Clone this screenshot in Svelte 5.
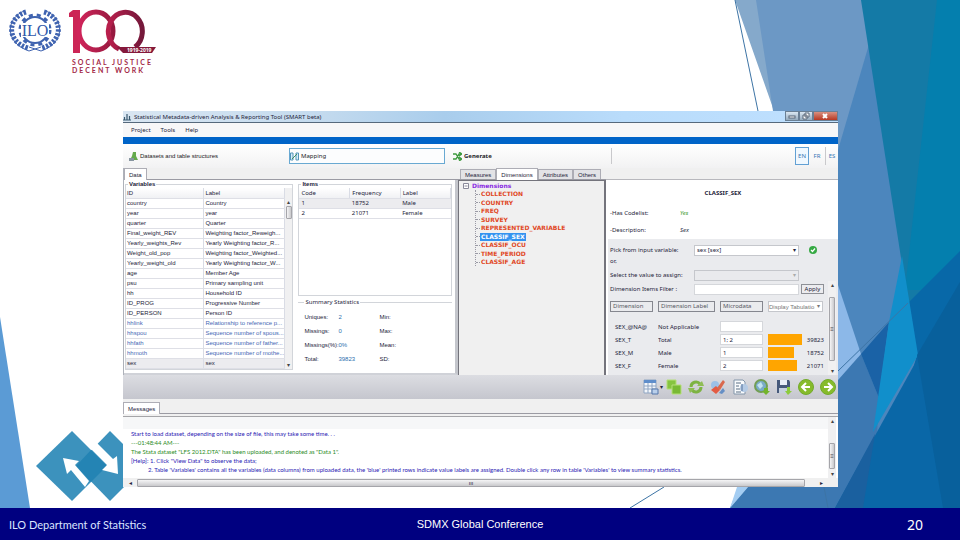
<script>
	const menu = ['Project', 'Tools', 'Help'];
	const languages = ['EN', 'FR', 'ES'];
	const dimensionTabs = ['Measures', 'Dimensions', 'Attributes', 'Others'];

	const variables = [
		{ id: 'country', label: 'Country' },
		{ id: 'year', label: 'year' },
		{ id: 'quarter', label: 'Quarter' },
		{ id: 'Final_weight_REV', label: 'Weighting factor_Reweigh...' },
		{ id: 'Yearly_weights_Rev', label: 'Yearly Weighting factor_R...' },
		{ id: 'Weight_old_pop', label: 'Weighting factor_Weighted...' },
		{ id: 'Yearly_weight_old', label: 'Yearly Weighting factor_W...' },
		{ id: 'age', label: 'Member Age' },
		{ id: 'psu', label: 'Primary sampling unit' },
		{ id: 'hh', label: 'Household ID' },
		{ id: 'ID_PROG', label: 'Progressive Number' },
		{ id: 'ID_PERSON', label: 'Person ID' },
		{ id: 'hhlink', label: 'Relationship to reference p...', labelled: true },
		{ id: 'hhspou', label: 'Sequence number of spous...', labelled: true },
		{ id: 'hhfath', label: 'Sequence number of father...', labelled: true },
		{ id: 'hhmoth', label: 'Sequence number of mothe...', labelled: true },
		{ id: 'sex', label: 'sex', selected: true }
	];

	const items = [
		{ code: 1, frequency: 18752, label: 'Male' },
		{ code: 2, frequency: 21071, label: 'Female' }
	];

	const stats = [
		['Uniques:', '2', 'Min:'],
		['Missings:', '0', 'Max:'],
		['Missings(%):', '0%', 'Mean:'],
		['Total:', '39823', 'SD:']
	];

	const dimensions = [
		'COLLECTION',
		'COUNTRY',
		'FREQ',
		'SURVEY',
		'REPRESENTED_VARIABLE',
		'CLASSIF_SEX',
		'CLASSIF_OCU',
		'TIME_PERIOD',
		'CLASSIF_AGE'
	];

	const codes = [
		{ code: 'SEX_@NA@', label: 'Not Applicable', value: '', count: null },
		{ code: 'SEX_T', label: 'Total', value: '1; 2', count: 39823, share: 100 },
		{ code: 'SEX_M', label: 'Male', value: '1', count: 18752, share: 77 },
		{ code: 'SEX_F', label: 'Female', value: '2', count: 21071, share: 86 }
	];

	const actions = ['Table', 'Copy', 'Refresh', 'Clear', 'Script', 'Search', 'Save', 'Back', 'Next'];

	let activeTab = $state('Dimensions');
	let activeDimension = $state('CLASSIF_SEX');
	let language = $state('EN');
</script>

<svelte:head>
	<title>ILO Department of Statistics</title>
</svelte:head>

<div class="slide">
	<svg class="backdrop" viewBox="0 0 960 508" preserveAspectRatio="none" aria-hidden="true">
		<path d="M735 0H960V508H730L774 400V111Z" fill="#85a9cb" />
		<path d="M756 0H960V508H773V111Z" fill="#6c98c5" />
		<path d="M882 0L838 150V508H960V0Z" fill="#4c86bd" />
		<path d="M730 508L748 487H838V380L861 354L879 398L873 508Z" fill="#3c78b2" />
		<path d="M730 508L737 487H748Z" fill="#a4cdf2" />
		<path d="M838 285L861 354L838 380Z" fill="#8cb8e8" />
		<path d="M861 354L889 322L879 398Z" fill="#1a62a6" />
		<path d="M861 0H960V300L908 303Z" fill="#147aa6" />
		<path d="M937 0H960V290H905Z" fill="#047fae" />
		<path d="M908 303L960 251V508H873L917 355Z" fill="#0868a8" />
		<path d="M902 256L918 355L873 432L889 322Z" fill="#118fcb" />
		<path d="M960 282L835 508H960Z" fill="#0a67a7" />
		<path d="M960 282L917 355L943 508H960Z" fill="#08609c" />
		<path d="M875 434L863 508H835Z" fill="#1a609f" />
		<path d="M735 0L758 111M838 371L908 303M664 487L630 508M824 487L828 508" fill="none" stroke="#3d74a5" stroke-width="1" />
		<path d="M0 317L30 508H0Z" fill="#5b9bd5" />
		<path d="M72 431L107 466L72 501L36 466Z" fill="#3c92bd" />
		<path d="M110 431L145 466L110 501L76 466Z" fill="#3c92bd" />
		<path d="M91 450L107 466L91 482L76 466Z" fill="#2484b4" />
		<path d="M63 458L79 461L75 465L89 481L85 487L71 470L67 474ZM93 443L97 443L113 459L117 456L118 474L102 470L107 465L90 448Z" fill="#fff" />
	</svg>

	<header class="brand">
		<svg class="emblem" viewBox="0 0 52 44" role="img" aria-label="ILO">
			<g fill="none" stroke="#3f63b0">
				<circle cx="26" cy="21" r="13" stroke-width="2" />
				<circle cx="26" cy="21" r="15" stroke-width="3" stroke-dasharray="4 4" />
				<path d="M17 3C-1 8-4 32 19 39M35 3C53 8 56 32 33 39" stroke-width="5" stroke-dasharray="2.5 1.5" />
				<path d="M15 2C-4 10-4 34 20 42L32 38M37 2C56 10 56 34 32 42L20 38" stroke-width="1" />
			</g>
			<rect x="12" y="14" width="28" height="14" fill="#fff" />
			<text x="26" y="27" text-anchor="middle">ILO</text>
		</svg>
		<div class="centenary">
			<svg viewBox="0 0 88 46" role="img" aria-label="100, 1919-2019">
				<defs>
					<linearGradient id="wine"><stop offset="0" stop-color="#d0245a" /><stop offset="1" stop-color="#96193f" /></linearGradient>
					<linearGradient id="plum"><stop offset="0" stop-color="#b81f4c" /><stop offset="1" stop-color="#74183a" /></linearGradient>
				</defs>
				<path d="M4 1H11V44H4V8H0V4Z" fill="#cc2556" />
				<ellipse cx="27" cy="22" rx="17" ry="19" fill="none" stroke="url(#wine)" stroke-width="5" />
				<path d="M50 40A17 19 0 1 1 66 38" fill="none" stroke="url(#plum)" stroke-width="5" />
				<path d="M48 38H87L83 44H54Z" fill="#85193b" />
				<text x="58" y="43">1919-2019</text>
			</svg>
			<p>SOCIAL JUSTICE<br />DECENT WORK</p>
		</div>
	</header>

	<main class="window">
		<div class="titlebar">
			<svg class="app-icon" viewBox="0 0 8 8"><path d="M0 7H8M1.500 7V4M4 7V1M6.500 7V3" stroke="#3a5a70" stroke-width="1.200" /></svg>
			<h1>Statistical Metadata-driven Analysis &amp; Reporting Tool (SMART beta)</h1>
			<div class="controls">
				<button aria-label="Minimise"><svg viewBox="0 0 10 8"><rect x="2" y="4" width="6" height="2" /></svg></button>
				<button aria-label="Restore"><svg viewBox="0 0 10 8"><path d="M4 1H8V5H4ZM2 3H6V7H2Z" /></svg></button>
				<button class="close" aria-label="Close"><svg viewBox="0 0 10 8"><path d="M3 2L7 6M7 2L3 6" /></svg></button>
			</div>
		</div>

		<nav class="menu">
			{#each menu as entry}<button>{entry}</button>{/each}
		</nav>

		<div class="steps">
			<button class="step">
				<svg viewBox="0 0 9 9"><path d="M4 0H7V4L9 8H1L3 4Z" fill="#65aa4b" /><path d="M0 6H5V9H0Z" fill="#8795a0" /></svg>
				Datasets and table structures
			</button>
			<button class="step active">
				<svg viewBox="0 0 9 9"><path d="M.5 1H3V8H.5ZM6 1H8.500V8H6Z" fill="#d7ecf9" stroke="#5295b8" /><path d="M2 7L7 2" stroke="#3f8e60" /></svg>
				Mapping
			</button>
			<button class="step">
				<svg viewBox="0 0 9 9"><path d="M0 2H3L6 7H8M0 7H3L6 2H8M6 0L9 2L6 4M6 5L9 7L6 9" fill="none" stroke="#3e9a3e" stroke-width="1.300" /></svg>
				<b>Generate</b>
			</button>
			<div class="languages">
				{#each languages as code}
					<button class:active={language === code} onclick={() => (language = code)}>{code}</button>
				{/each}
			</div>
		</div>

		<div class="workspace">
			<section class="data">
				<div class="tabs"><button class="active">Data</button></div>
				<div class="data-body">
					<fieldset class="variables">
						<legend>Variables</legend>
						<div class="scroll-box">
							<table>
								<thead><tr><th>ID</th><th>Label</th></tr></thead>
								<tbody>
									{#each variables as v (v.id)}
										<tr class:labelled={v.labelled} class:selected={v.selected}><td>{v.id}</td><td>{v.label}</td></tr>
									{/each}
								</tbody>
							</table>
							<div class="scrollbar list-scroll"><i>▴</i><span class="thumb"></span><i>▾</i></div>
						</div>
					</fieldset>
					<div class="details">
						<fieldset class="items">
							<legend>Items</legend>
							<table>
								<thead><tr><th>Code</th><th>Frequency</th><th>Label</th></tr></thead>
								<tbody>
									{#each items as item, i}
										<tr class:selected={i === 0}><td>{item.code}</td><td>{item.frequency}</td><td>{item.label}</td></tr>
									{/each}
								</tbody>
							</table>
						</fieldset>
						<fieldset class="summary">
							<legend>Summary Statistics</legend>
							<div class="stats">
								{#each stats as [name, value, other]}
									<span>{name}</span><span class="value">{value}</span><span>{other}</span>
								{/each}
							</div>
						</fieldset>
					</div>
				</div>
			</section>

			<section class="structure">
				<div class="tabs">
					{#each dimensionTabs as tab}
						<button class:active={activeTab === tab} onclick={() => (activeTab = tab)}>{tab}</button>
					{/each}
				</div>
				<div class="tree">
					<p><svg viewBox="0 0 6 6"><path d="M.5 .5H5.500V5.500H.5ZM1.500 3H4.500" fill="#fff" stroke="#8a8a9a" /></svg>Dimensions</p>
					<ul>
						{#each dimensions as name}
							<li><button class:active={activeDimension === name} onclick={() => (activeDimension = name)}>{name}</button></li>
						{/each}
					</ul>
				</div>
			</section>

			<section class="mapping">
				<h2>CLASSIF_SEX</h2>
				<dl>
					<dt>-Has Codelist:</dt><dd class="yes">Yes</dd>
					<dt>-Description:</dt><dd>Sex</dd>
				</dl>
				<div class="mapping-form">
					<div class="field">
						<label for="source">Pick from input variable:</label>
						<span class="pick"><select id="source"><option>sex [sex]</option></select></span>
						<svg class="ok" viewBox="0 0 8 8"><circle cx="4" cy="4" r="4" fill="#36a944" /><path d="M2 4L3.500 5.500L6 2.500" fill="none" stroke="#fff" stroke-width="1.200" /></svg>
					</div>
					<p>or,</p>
					<div class="field">
						<label for="fixed">Select the value to assign:</label>
						<span class="pick"><select id="fixed" disabled><option></option></select></span>
					</div>
					<div class="codelist">
						<div class="codelist-main">
							<div class="field filter">
								<label for="filter">Dimension Items Filter :</label>
								<input id="filter" type="text" />
								<button>Apply</button>
							</div>
							<table>
								<thead>
									<tr>
										<th><span class="head">Dimension</span></th>
										<th><span class="head">Dimension Label</span></th>
										<th><span class="head">Microdata</span></th>
										<th><span class="pick"><select aria-label="Display"><option>Display Tabulatio</option></select></span></th>
									</tr>
								</thead>
								<tbody>
									{#each codes as row}
										<tr>
											<td>{row.code}</td>
											<td>{row.label}</td>
											<td><input type="text" value={row.value} aria-label={row.code} /></td>
											<td>
												{#if row.count}
													<div class="tally"><span class="track"><span class="bar" style="width: {row.share}%"></span></span>{row.count}</div>
												{/if}
											</td>
										</tr>
									{/each}
								</tbody>
							</table>
						</div>
						<div class="scrollbar code-scroll"><i>▴</i><span class="thumb">≡</span><i>▾</i></div>
					</div>
				</div>
			</section>
		</div>

		<div class="actions">
			{#each actions as action, i}
				<button aria-label={action}>
					<svg viewBox="0 0 16 16">
						{#if i === 0}
							<path d="M1 1H13V14H1Z" fill="#f2f6fb" stroke="#8fa5c2" /><path d="M1 1H13V4H1Z" fill="#5f8ecb" /><path d="M1 7H13M1 10H13M5 4V14M9 4V14" stroke="#8fa5c2" /><path d="M9 10H15V15H9Z" fill="#b9cfeb" stroke="#5577aa" />
						{:else if i === 1}
							<path d="M1 1H10V10H1Z" fill="#86c440" stroke="#b5df79" /><path d="M6 6H15V15H6Z" fill="#79b935" stroke="#b5df79" />
						{:else if i === 2}
							<path d="M3 8A5 5 0 0 1 12 5M13 8A5 5 0 0 1 4 11" fill="none" stroke="#7db343" stroke-width="3" /><path d="M9 7H16L14 2ZM0 9H7L2 14Z" fill="#8fbd55" />
						{:else if i === 3}
							<circle cx="5" cy="6" r="4" fill="#9cc1e8" /><path d="M1 11L6 7L10 11L6 15Z" fill="#e35b43" /><path d="M7 9L13 1L15 3L10 11Z" fill="#d9684d" /><path d="M9 14L13 9L15 12L12 15Z" fill="#668fc5" />
						{:else if i === 4}
							<path d="M2 1H11L13 3V15H2Z" fill="#f9fbfd" stroke="#8295aa" /><path d="M4 4H9M4 7H7M4 10H8M4 13H9" stroke="#5b6e84" /><circle cx="12" cy="9" r="4" fill="#b5cbe5" /><path d="M10 5V12" stroke="#55739c" />
						{:else if i === 5}
							<circle cx="7" cy="7" r="6" fill="#7aacc8" stroke="#729e55" stroke-width="2" /><path d="M3 6L7 3L9 7L6 10Z" fill="#c3e3f0" /><path d="M10 9H14V12H16L12 16L8 12H10Z" fill="#72b42b" />
						{:else if i === 6}
							<path d="M1 1H13L14 3V14H1Z" fill="#46597a" /><path d="M4 1H11V6H4Z" fill="#e8eef6" /><path d="M3 9H11V14H3Z" fill="#c5d0de" /><path d="M11 8H14V12H16L12 16L9 12H11Z" fill="#8dcb3c" />
						{:else}
							<circle cx="8" cy="8" r="7.500" fill="#86bb2b" stroke="#73aa2c" />
							{#if i === 7}<path d="M12 8H5M8 4L4 8L8 12" fill="none" stroke="#fff" stroke-width="2" />{:else}<path d="M4 8H11M8 4L12 8L8 12" fill="none" stroke="#fff" stroke-width="2" />{/if}
						{/if}
					</svg>
				</button>
				{#if i === 0}<span class="caret">▾</span>{/if}
			{/each}
		</div>

		<section class="messages">
			<div class="tabs"><button class="active">Messages</button></div>
			<div class="log-frame">
				<div class="log">
					<p>Start to load dataset, depending on the size of file, this may take some time. . .</p>
					<p class="done">---01:48:44 AM---</p>
					<p class="done">The Stata dataset "LFS 2012.DTA" has been uploaded, and denoted as "Data 1".</p>
					<p>[Help]: 1. Click "View Data" to observe the data;</p>
					<p class="indent">2. Table 'Variables' contains all the variables (data columns) from uploaded data, the 'blue' printed rows indicate value labels are assigned. Double click any row in table 'Variables' to view summary statistics.</p>
				</div>
				<div class="scrollbar log-scroll"><i>▴</i><span class="thumb">≡</span><i>▾</i></div>
			</div>
			<div class="hscroll"><i>◂</i><span class="thumb">ııı</span><i>▸</i></div>
		</section>
	</main>

	<footer>
		<span class="department">ILO Department of Statistics</span>
		<span class="event">SDMX Global Conference</span>
		<span class="page">20</span>
	</footer>
</div>

<style>
	:global(body) {
		margin: 0;
	}

	.slide,
	.slide * {
		box-sizing: border-box;
	}

	.slide {
		position: relative;
		min-height: 100vh;
		display: flex;
		flex-direction: column;
		background: #fff;
		font-family: 'Noto Sans', sans-serif;
		overflow: hidden;
	}

	.backdrop {
		position: absolute;
		left: 0;
		top: 0;
		width: 100%;
		height: calc(100% - 32px);
	}

	.brand {
		position: relative;
		display: flex;
		gap: 8px;
		padding: 9px;
		min-height: 111px;
	}

	.emblem {
		width: 52px;
		height: 44px;
	}

	.emblem text {
		font: 16px 'Liberation Serif', serif;
		fill: #3058aa;
	}

	.centenary svg {
		display: block;
		width: 88px;
		height: 46px;
	}

	.centenary text {
		font: bold 5px 'Noto Sans', sans-serif;
		fill: #fff;
	}

	.centenary p {
		margin: 3px 0 0 3px;
		font: bold 7px/8px Lato, sans-serif;
		letter-spacing: 2px;
		color: #a32a48;
	}

	button,
	input,
	select {
		margin: 0;
		padding: 0;
		border: 0;
		border-radius: 0;
		background: none;
		font: inherit;
		color: inherit;
	}

	h1,
	h2,
	p,
	ul,
	dl,
	dd,
	fieldset {
		margin: 0;
		padding: 0;
	}

	table {
		border-collapse: collapse;
		table-layout: fixed;
		width: 100%;
	}

	th,
	td {
		padding: 0;
		font-weight: 400;
		text-align: left;
		white-space: nowrap;
		overflow: hidden;
	}

	i {
		font-style: normal;
	}

	.window {
		position: relative;
		display: flex;
		flex-direction: column;
		flex: 1;
		margin: 0 122px 21px 123px;
		background: #f0f0f0;
		color: #24243a;
		font-size: 6px;
		line-height: 8px;
		white-space: nowrap;
	}

	.titlebar {
		display: flex;
		align-items: center;
		gap: 3px;
		height: 12px;
		background: linear-gradient(90deg, #d9e6f2, #c3daee 28%, #a9cdec 45%, #b9dcfb 70%, #bfe0ff);
		border-bottom: 1px solid #56697c;
	}

	.titlebar h1 {
		flex: 1;
		font-size: 6px;
		font-weight: 400;
	}

	.app-icon {
		width: 8px;
		height: 8px;
	}

	.controls {
		display: flex;
		align-self: flex-start;
		height: 10px;
		width: 53px;
	}

	.controls button {
		flex: 1;
		border: 1px solid #6a7f94;
		background: linear-gradient(#dbe7f2, #94aabd);
	}

	.controls button.close {
		flex: 2;
		background: linear-gradient(#d99080, #b83822);
	}

	.controls svg {
		display: block;
		width: 10px;
		height: 8px;
		margin: auto;
		fill: #fff;
		stroke: #566577;
	}

	.controls .close svg {
		stroke: #fff;
		stroke-width: 2;
	}

	.menu {
		display: flex;
		gap: 10px;
		height: 21px;
		padding: 1px 8px 2px;
		background: #f7f7f8;
		border-bottom: 7px solid #0064c8;
	}

	.steps {
		display: flex;
		align-items: center;
		height: 24px;
		padding-left: 6px;
		background: linear-gradient(#fff, #f2f2f3);
	}

	.step {
		display: flex;
		align-items: center;
		gap: 2px;
		width: 22%;
		height: 16px;
		color: #1a1a24;
	}

	.step:first-child {
		width: 160px;
		font-family: 'Liberation Sans', sans-serif;
	}

	.step svg {
		width: 9px;
		height: 9px;
	}

	.step.active {
		border: 1px solid #69a9d2;
		background: #fcfdfe;
		margin-right: 8px;
	}

	.step:nth-child(3) {
		width: 159px;
		border-right: 1px solid #c9c9cc;
	}

	.languages {
		display: flex;
		margin-left: auto;
		color: #3577b5;
	}

	.languages button {
		width: 16px;
		height: 18px;
	}

	.languages button.active {
		width: 14px;
		border: 1px solid #62a0d4;
		background: #f0f8ff;
	}

	.languages button:last-child {
		width: 13px;
		border-left: 1px solid #c9c9cc;
	}

	.workspace {
		display: grid;
		grid-template-columns: 335fr 148fr 232fr;
		height: 207px;
	}

	.tabs {
		display: flex;
		align-items: flex-end;
		height: 12px;
		border-bottom: 1px solid #9b9ba3;
		font-family: 'Liberation Sans', sans-serif;
	}

	.tabs button {
		height: 10px;
		padding: 0 4px;
		border: 1px solid #adadb5;
		border-bottom: 0;
		background: #e3e3e6;
	}

	.tabs button.active {
		height: 12px;
		margin-bottom: -1px;
		background: #fff;
	}

	.data {
		border-left: 1px solid #aeb2ba;
	}

	.data-body {
		display: flex;
		gap: 5px;
		height: 195px;
		padding: 0 3px 3px 1px;
		background: #fff;
		border-right: 3px solid #c4c6cc;
		border-bottom: 2px solid #d0d2d8;
	}

	fieldset {
		min-width: 0;
		border: 1px solid #d2d5da;
	}

	legend {
		margin-left: 2px;
		padding: 0 1px;
		line-height: 8px;
	}

	.variables {
		flex: 168;
	}

	.variables legend,
	.items legend {
		font-family: 'Liberation Sans', sans-serif;
		font-weight: 700;
	}

	.scroll-box,
	.stats {
		font-family: 'Liberation Sans', sans-serif;
	}

	.scroll-box {
		display: flex;
	}

	th,
	td {
		height: 10px;
		padding-left: 1px;
		border-right: 1px solid #d9dce5;
		border-bottom: 1px solid #dedfe6;
	}

	th {
		background: linear-gradient(#fff, #f0f1f4);
	}

	.scroll-box th:first-child {
		width: 49%;
	}

	.labelled {
		color: #4669b4;
	}

	.selected {
		background: #ececef;
	}

	.scrollbar {
		display: flex;
		flex-direction: column;
		align-items: center;
		flex: none;
		width: 8px;
		background: #f0f0f1;
		color: #444;
	}

	.thumb {
		display: flex;
		align-items: center;
		justify-content: center;
		border: 1px solid #a5a5aa;
		border-radius: 1px;
		background: linear-gradient(90deg, #f5f5f6, #c9c9cc);
	}

	.scrollbar .thumb {
		width: 6px;
	}

	.scrollbar i:last-child {
		margin-top: auto;
	}

	.list-scroll {
		width: 7px;
		padding-top: 10px;
	}

	.list-scroll .thumb {
		height: 13px;
	}

	.details {
		flex: 155;
		display: flex;
		flex-direction: column;
		gap: 2px;
	}

	.items {
		height: 116px;
	}

	.items td,
	.items th {
		padding-left: 2px;
	}

	.items td {
		border-right: 0;
	}

	.summary {
		flex: 1;
		border-width: 1px 0 0;
	}

	.summary legend {
		margin-left: 6px;
	}

	.stats {
		display: grid;
		grid-template-columns: 34px 41px 1fr;
		row-gap: 6px;
		padding: 7px 6px 0;
	}

	.stats .value {
		color: #2b6fae;
	}

	.structure .tabs {
		padding-left: 2px;
	}

	.structure .tabs button:hover {
		color: #00407a;
	}

	.tree {
		height: 195px;
		border: solid #74747c;
		border-width: 1px 2px 0 1px;
		padding: 1px 4px;
		font-family: 'DejaVu Sans', sans-serif;
		font-weight: 700;
	}

	.tree p {
		display: flex;
		align-items: center;
		gap: 3px;
		color: #8a2be2;
	}

	.tree p svg {
		width: 6px;
		height: 6px;
	}

	.tree ul {
		display: flex;
		flex-direction: column;
		justify-content: space-between;
		height: 76px;
		margin-left: 12px;
		border-left: 1px dotted #9a9aa5;
		list-style: none;
	}

	.tree li {
		display: flex;
		align-items: center;
		color: #e0471f;
	}

	.tree li::before {
		content: '';
		width: 4px;
		border-top: 1px dotted #9a9aa5;
	}

	.tree li button {
		padding: 0 1px;
	}

	.tree li button.active {
		background: #3393f0;
		color: #fff;
	}

	.mapping {
		display: flex;
		flex-direction: column;
		margin-top: 11px;
		padding-left: 2px;
		border-top: 1px solid #b8b8bd;
		background: #fff;
	}

	.mapping h2 {
		padding-top: 9px;
		font-size: 6px;
		line-height: 8px;
		text-align: center;
	}

	dl {
		display: grid;
		grid-template-columns: 70px 1fr;
		row-gap: 9px;
		padding: 12px 2px 5px;
	}

	dd {
		font-style: italic;
	}

	.yes {
		color: #3d9a2d;
	}

	.mapping-form {
		flex: 1;
		display: flex;
		flex-direction: column;
		padding: 5px 2px 0 2px;
		background: #eaebee;
	}

	.field {
		display: flex;
		align-items: center;
		height: 12px;
	}

	.field label {
		width: 84px;
	}

	.pick {
		position: relative;
		display: block;
		background: #fff;
		border: 1px solid #c5c7cc;
	}

	.pick::after {
		content: '▾';
		position: absolute;
		right: 2px;
		top: 0;
		pointer-events: none;
	}

	.pick select {
		display: block;
		width: 100%;
		height: 9px;
		padding-left: 2px;
		appearance: none;
	}

	.field .pick {
		width: 105px;
	}

	.pick:has(:disabled) {
		background: #e9eaed;
		color: #aaa;
	}

	.ok {
		width: 8px;
		height: 8px;
		margin-left: 10px;
	}

	.mapping-form > p {
		height: 13px;
		line-height: 10px;
	}

	.codelist {
		flex: 1;
		display: flex;
		min-height: 0;
	}

	.codelist-main {
		flex: 1;
		padding-top: 2px;
	}

	.codelist input {
		display: block;
		width: 43px;
		height: 11px;
		padding: 0 2px;
		border: 1px solid #d5d7db;
		background: #fff;
	}

	.codelist .filter input {
		width: 105px;
	}

	.filter button {
		width: 23px;
		height: 10px;
		margin-left: 2px;
		border: 1px solid #8e9096;
		background: #ececef;
	}

	.codelist table {
		margin-top: 6px;
	}

	.codelist th,
	.codelist td {
		height: 13px;
		padding: 0;
		border: 0;
		background: none;
	}

	.codelist th {
		height: 19px;
		padding-right: 5px;
		vertical-align: top;
	}

	.codelist td:first-child {
		padding-left: 5px;
	}

	.codelist th:nth-child(1) {
		width: 48px;
	}

	.codelist th:nth-child(2) {
		width: 62px;
	}

	.codelist th:nth-child(3) {
		width: 48px;
	}

	.head {
		display: block;
		height: 11px;
		padding-left: 2px;
		border: 1px solid #85878f;
		color: #555762;
	}

	.codelist .pick {
		font-family: 'Liberation Sans', sans-serif;
		color: #777;
	}

	.codelist .pick select {
		padding-left: 0;
	}

	.tally {
		display: flex;
		align-items: center;
		justify-content: space-between;
		padding-right: 4px;
	}

	.track {
		width: 34px;
	}

	.bar {
		display: block;
		height: 11px;
		background: #ffa500;
	}

	.code-scroll .thumb {
		height: 64px;
		margin-top: 8px;
	}

	.actions {
		display: flex;
		align-items: center;
		justify-content: flex-end;
		gap: 6px;
		height: 24px;
		padding-right: 2px;
		background: linear-gradient(#dcdde2, #c5c6ce);
	}

	.actions button,
	.actions svg {
		display: block;
		width: 16px;
		height: 16px;
	}

	.caret {
		width: 4px;
		margin: 0 -4px 0 -5px;
	}

	.messages {
		flex: 1;
		display: flex;
		flex-direction: column;
		padding-top: 3px;
	}

	.log-frame {
		display: flex;
		flex: 1;
		margin-top: 2px;
		border-top: 1px solid #a5a5a8;
		background: #fff;
	}

	.log {
		flex: 1;
		min-width: 0;
		padding: 0 8px;
		border-top: 12px solid #f6f7f8;
		font-family: Lato, sans-serif;
		line-height: 9px;
		color: #2a22b4;
	}

	.log .done {
		color: #2c8c26;
	}

	.log .indent {
		padding-left: 17px;
	}

	.log-scroll {
		margin-right: 2px;
	}

	.log-scroll .thumb {
		height: 26px;
		margin-top: 18px;
	}

	.hscroll {
		display: flex;
		align-items: center;
		gap: 5px;
		height: 9px;
		padding: 0 15px 0 6px;
	}

	.hscroll .thumb {
		flex: 1;
		height: 8px;
		margin-right: 10px;
		background: linear-gradient(#f5f5f6, #c9c9cc);
	}

	footer {
		position: relative;
		display: grid;
		grid-template-columns: 1fr auto 1fr;
		align-items: center;
		height: 32px;
		padding: 0 9px;
		background: #000080;
		color: #fff;
	}

	.department {
		font: 11px Lato, sans-serif;
		color: #dbe5ff;
	}

	.event {
		font: 11px 'Liberation Sans', sans-serif;
	}

	.page {
		padding-right: 28px;
		font-size: 14px;
		text-align: right;
	}
</style>
